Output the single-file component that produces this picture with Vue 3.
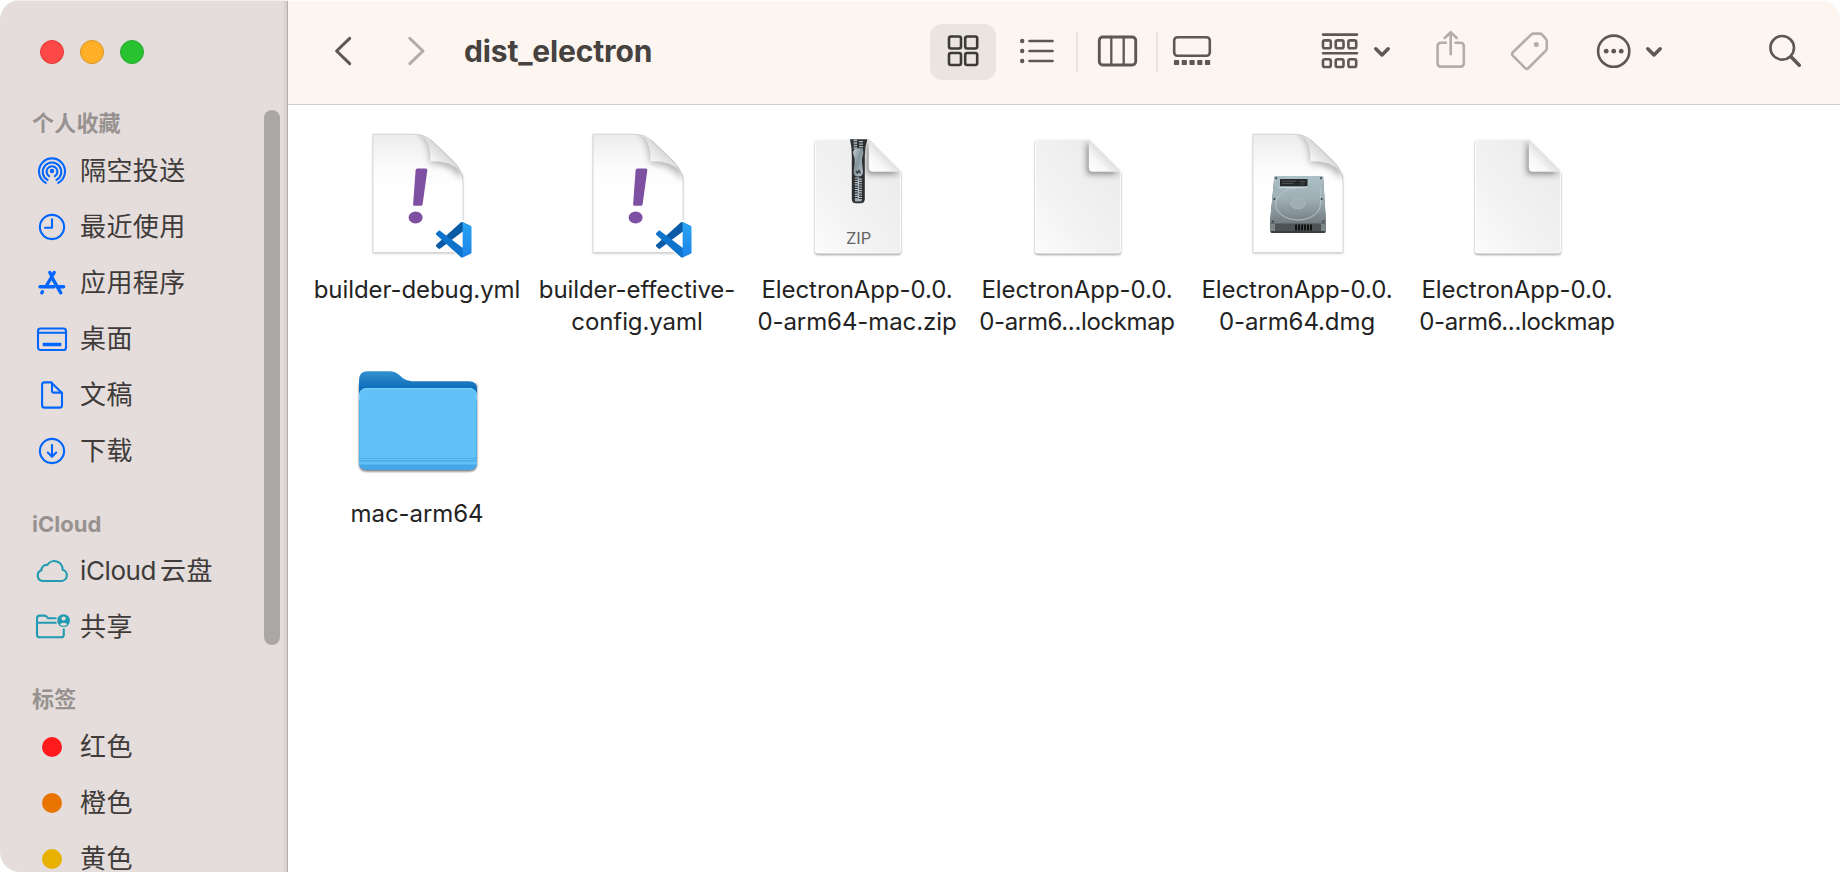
<script setup>
const favorites = [
  { icon: 'airdrop', label: '隔空投送' },
  { icon: 'recents', label: '最近使用' },
  { icon: 'apps', label: '应用程序' },
  { icon: 'desktop', label: '桌面' },
  { icon: 'doc', label: '文稿' },
  { icon: 'download', label: '下载' }
]
const tags = [
  { color: 'red', label: '红色' },
  { color: 'orange', label: '橙色' },
  { color: 'yellow', label: '黄色' }
]
const files = [
  { kind: 'yml', lines: ['builder-debug.yml'] },
  { kind: 'yml', lines: ['builder-effective-', 'config.yaml'] },
  { kind: 'zip', lines: ['ElectronApp-0.0.', '0-arm64-mac.zip'] },
  { kind: 'blank', lines: ['ElectronApp-0.0.', '0-arm6...lockmap'] },
  { kind: 'dmg', lines: ['ElectronApp-0.0.', '0-arm64.dmg'] },
  { kind: 'blank', lines: ['ElectronApp-0.0.', '0-arm6...lockmap'] },
  { kind: 'folder', lines: ['mac-arm64'] }
]
const teeth = Array.from({ length: 10 }, (_, i) => 48 + i * 2.3)
const topTeeth = [10.5, 13, 15.5, 18]
</script>

<template>
  <div class="window">
    <aside class="sidebar">
      <div class="lights">
        <span class="light close"></span>
        <span class="light minimize"></span>
        <span class="light zoom"></span>
      </div>

      <h2 class="heading first cjk">个人收藏</h2>
      <div v-for="item in favorites" :key="item.icon" class="row">
        <svg class="side-icon" viewBox="0 0 36 36">
          <g v-if="item.icon === 'airdrop'">
            <circle cx="18" cy="18" r="2.2" class="solid" />
            <path d="M15.1 23.2A5.4 5.4 0 1 1 20.9 23.2" />
            <path d="M13.5 26.9A9.3 9.3 0 1 1 22.5 26.9" />
            <path d="M11.8 29.8A13 13 0 1 1 24.2 29.8" />
          </g>
          <g v-else-if="item.icon === 'recents'">
            <circle cx="18" cy="18" r="12.1" />
            <path d="M18 10.2V18.8H11" />
          </g>
          <g v-else-if="item.icon === 'apps'" class="thick">
            <path d="M15.8 7.5L17.9 11.2M20.2 7.5L12 21.5M6 21.8H20M8.4 26.8L7.8 27.8" />
            <path d="M18.3 13.2L26.8 27.8M25 21.8H29.6" />
          </g>
          <g v-else-if="item.icon === 'desktop'">
            <rect x="4" y="7.5" width="28" height="21.5" rx="2.6" />
            <path d="M4 11.8H32" />
            <rect x="8.7" y="21.8" width="18.6" height="3.4" rx=".6" class="solid" />
          </g>
          <g v-else-if="item.icon === 'doc'">
            <path d="M10.5 5.4H17.2L28 16V28.2Q28 30.6 25.6 30.6H10.5Q8.1 30.6 8.1 28.2V7.8Q8.1 5.4 10.5 5.4Z" />
            <path d="M18 5.8V14.3Q18 15.6 19.3 15.6H27.8" />
          </g>
          <g v-else>
            <circle cx="18" cy="18" r="12.1" />
            <path d="M18 12V23.4M13.8 19.6L18 23.8L22.2 19.6" />
          </g>
        </svg>
        <span class="cjk-label">{{ item.label }}</span>
      </div>

      <h2 class="heading">iCloud</h2>
      <div class="row">
        <svg class="side-icon teal" viewBox="0 0 36 36">
          <path d="M8.6 28A5.6 5.6 0 0 1 7.4 17.2A5 5 0 0 1 13.3 12A8.3 8.3 0 0 1 28.6 16.8A5.7 5.7 0 0 1 27.2 28Z" />
        </svg>
        <span class="latin">iCloud</span><span class="cjk-label">云盘</span>
      </div>
      <div class="row">
        <svg class="side-icon teal" viewBox="0 0 36 36">
          <path d="M21.6 9.3H14.2L12.4 7.4Q11.6 6.6 10.4 6.6H5.6Q3 6.6 3 9.2V25.7Q3 28.3 5.6 28.3H27.2Q29.8 28.3 29.8 25.7V20.2M3 13.8H21.8" />
          <circle cx="29.6" cy="11.6" r="6.4" class="solid-only" />
          <circle cx="29.6" cy="9.5" r="2.1" class="cut" />
          <path d="M25.8 15.6A4.3 3.4 0 0 1 33.4 15.6Q29.6 18.2 25.8 15.6Z" class="cut" />
        </svg>
        <span class="cjk-label">共享</span>
      </div>

      <h2 class="heading cjk">标签</h2>
      <div v-for="tag in tags" :key="tag.color" class="row">
        <span class="dot-cell"><i class="dot" :class="tag.color"></i></span>
        <span class="cjk-label">{{ tag.label }}</span>
      </div>
      <div class="scrollbar"></div>
    </aside>

    <main class="main">
      <header class="toolbar">
        <svg class="tool back" viewBox="0 0 30 56"><path class="nav" d="M21.7 14.3L8.6 27L21.7 39.7" /></svg>
        <svg class="tool forward faded" viewBox="0 0 30 56"><path class="nav" d="M8.8 14.3L22 27L8.8 39.7" /></svg>
        <h1 class="title">dist_electron</h1>

        <svg class="tool view-grid" viewBox="0 0 66 56">
          <rect x="19" y="12.5" width="12" height="12" rx="2" /><rect x="35.2" y="12.5" width="12" height="12" rx="2" />
          <rect x="19" y="29" width="12" height="12" rx="2" /><rect x="35.2" y="29" width="12" height="12" rx="2" />
        </svg>
        <svg class="tool view-list" viewBox="0 0 54 56">
          <g class="fill"><circle cx="12.2" cy="17" r="2.2" /><circle cx="12.2" cy="27" r="2.2" /><circle cx="12.2" cy="37" r="2.2" /></g>
          <path d="M19.5 17H42.5M19.5 27H42.5M19.5 37H42.5" />
        </svg>
        <i class="sep"></i>
        <svg class="tool view-columns" viewBox="0 0 56 56">
          <rect x="9.3" y="13" width="36.4" height="28" rx="3.4" class="heavy" />
          <path d="M21.3 13V41M33.7 13V41" class="mid" />
        </svg>
        <i class="sep"></i>
        <svg class="tool view-gallery" viewBox="0 0 54 56">
          <rect x="8.2" y="13.2" width="35.6" height="18.6" rx="3.2" />
          <g class="fill">
            <rect v-for="n in 5" :key="n" :x="0.2 + n * 7.75" y="36" width="5.2" height="5" rx=".7" />
          </g>
        </svg>

        <svg class="tool group" viewBox="0 0 84 56">
          <path d="M9 10.6H43M9 29.3H43" />
          <rect v-for="n in 3" :key="'a' + n" :x="-3.7 + n * 12.7" y="16.4" width="7.8" height="7.8" rx="1.8" />
          <rect v-for="n in 3" :key="'b' + n" :x="-3.7 + n * 12.7" y="35.2" width="7.8" height="7.8" rx="1.8" />
          <path class="chevron" d="M61.8 24.8L68 31L74.2 24.8" />
        </svg>
        <svg class="tool share faded" viewBox="0 0 42 56">
          <path d="M15.8 18.8H11Q7.6 18.8 7.6 22.2V39.2Q7.6 42.6 11 42.6H30.4Q33.8 42.6 33.8 39.2V22.2Q33.8 18.8 30.4 18.8H25.6M20.7 30.2V8.8M14.7 14L20.7 8.2L26.7 14" />
        </svg>
        <svg class="tool tag faded" viewBox="0 0 52 56">
          <path d="M27.2 10.6Q28.2 9.6 29.6 9.6H35.6Q37.1 9.6 38.2 10.7L41.8 14.8Q42.8 15.9 42.8 17.3V24.2Q42.8 25.7 41.8 26.7L24.5 44Q22.8 45.8 21 43.9L9 31.8Q7.2 30 9 28.2Z" />
          <circle cx="32.3" cy="20.5" r="2.5" class="dotfill" />
        </svg>
        <svg class="tool more" viewBox="0 0 80 56">
          <circle cx="23.7" cy="27.2" r="15.6" />
          <g class="fill"><circle cx="16.2" cy="27.2" r="2.4" /><circle cx="23.7" cy="27.2" r="2.4" /><circle cx="31.2" cy="27.2" r="2.4" /></g>
          <path class="chevron" d="M57.8 24.8L64 31L70.2 24.8" />
        </svg>
        <svg class="tool search" viewBox="0 0 50 56">
          <circle cx="22.2" cy="23.8" r="11.8" />
          <path class="handle" d="M31.5 33.2L39.3 41.2" />
        </svg>
      </header>

      <section class="files">
        <figure v-for="(file, i) in files" :key="i" class="file">
          <svg class="file-icon" viewBox="0 0 128 128">
            <defs>
              <linearGradient :id="'page' + i" x1="0" y1="1" x2="1" y2="0">
                <stop offset="0" stop-color="#fcfcfc" /><stop offset=".35" stop-color="#f3f3f3" /><stop offset="1" stop-color="#e9e9e9" />
              </linearGradient>
              <linearGradient :id="'fold' + i" x1="0" y1="1" x2=".55" y2=".45">
                <stop offset="0" stop-color="#fff" /><stop offset=".5" stop-color="#f8f8f8" /><stop offset="1" stop-color="#dcdcdc" />
              </linearGradient>
              <linearGradient :id="'top' + i" x1="0" y1="0" x2="0" y2="1">
                <stop offset="0" stop-color="#ededed" /><stop offset=".3" stop-color="#fcfcfc" /><stop offset=".5" stop-color="#fff" />
              </linearGradient>
              <filter :id="'blur' + i" x="-50%" y="-50%" width="200%" height="200%"><feGaussianBlur stdDeviation="3" /></filter>
              <filter :id="'soft' + i" x="-20%" y="-20%" width="140%" height="140%"><feGaussianBlur stdDeviation="1" /></filter>
              <clipPath :id="'curl' + i"><path d="M19 4.3H62Q70 4.3 77 10L101 33Q109 41 109 54V122.5H19Z" /></clipPath>
              <clipPath :id="'sheet' + i"><path d="M24 9.3H75L107 41.5V120.5Q107 123.5 104 123.5H24Q21 123.5 21 120.5V12.3Q21 9.3 24 9.3Z" /></clipPath>
              <linearGradient :id="'metal' + i" x1="0" y1="0" x2="0" y2="1">
                <stop offset="0" stop-color="#acc0c7" /><stop offset=".5" stop-color="#9dadb3" /><stop offset="1" stop-color="#737c80" />
              </linearGradient>
              <linearGradient :id="'back' + i" x1="0" y1="0" x2="0" y2="1">
                <stop offset="0" stop-color="#3391d0" /><stop offset=".4" stop-color="#0d6cba" />
              </linearGradient>
              <linearGradient :id="'pull' + i" x1="0" y1="0" x2="1" y2="1">
                <stop offset="0" stop-color="#c4d0d8" /><stop offset=".45" stop-color="#84939c" /><stop offset="1" stop-color="#b9c7d0" />
              </linearGradient>
              <linearGradient :id="'code' + i" x1="0" y1="0" x2="0" y2="1">
                <stop offset="0" stop-color="#29a5f3" /><stop offset="1" stop-color="#1d83ea" />
              </linearGradient>
            </defs>

            <!-- white curled document -->
            <g v-if="file.kind === 'yml' || file.kind === 'dmg'">
              <path d="M19 5H62L109 45V123.4H19Z" fill="#000" opacity=".25" :filter="`url(#soft${i})`" />
              <path d="M19 4.3H62Q70 4.3 77 10L101 33Q109 41 109 54V122.5H19Z" :fill="`url(#top${i})`" stroke="#d2d2d2" stroke-width=".8" />
              <g :clip-path="`url(#curl${i})`">
                <path d="M60 -2Q75 8 75.5 31L78 34Q96 34 108 50V36L80 0Z" fill="#777" opacity=".5" :filter="`url(#blur${i})`" />
              </g>
              <path d="M65 4.6Q77 9 76.4 31.2Q96 30.5 105.5 40.5L101 33L77 10Q72 5.4 65 4.6Z" :fill="`url(#fold${i})`" />
              <path d="M77 10L101 33" stroke="#bababa" stroke-width=".8" />
            </g>

            <g v-if="file.kind === 'yml'">
              <path d="M63.4 38.6H71.8Q73.6 38.6 73.3 40.4L68.6 74.2Q68.4 75.8 66.8 75.8H60.5Q59 75.8 59.1 74.2L61.6 40.2Q61.8 38.6 63.4 38.6Z" fill="#7e50a1" />
              <ellipse cx="61.6" cy="87.4" rx="7" ry="6" fill="#7e50a1" />
              <g transform="translate(82 92) scale(.355)">
                <path d="M75 0L100 12V88L75 100L40 70L9 77L-1 66L16 50L-1 34L9 23L40 30Z" fill="#fff" stroke="#fff" stroke-width="10" stroke-linejoin="round" />
                <path fill="#0a5ba6" d="M96.46 10.8L75.86 .88C73.47-.27 70.62.21 68.75 2.08L1.3 63.58C-.52 65.24-.51 68.09 1.3 69.75L6.81 74.75C8.3 76.1 10.53 76.2 12.13 74.99L93.36 13.37C96.09 11.3 100 13.25 100 16.67V16.43C100 14.03 98.62 11.84 96.46 10.8Z" />
                <path fill="#0e73cb" d="M96.46 89.2L75.86 99.12C73.47 100.27 70.62 99.79 68.75 97.92L1.3 36.42C-.52 34.76-.51 31.91 1.3 30.25L6.81 25.25C8.3 23.9 10.53 23.8 12.13 25.01L93.36 86.63C96.09 88.7 100 86.75 100 83.33V83.57C100 85.97 98.62 88.16 96.46 89.2Z" />
                <path :fill="`url(#code${i})`" d="M75.86 99.13C73.47 100.27 70.62 99.79 68.75 97.92C71.06 100.22 75 98.59 75 95.33V4.67C75 1.41 71.06-.22 68.75 2.08C70.62.21 73.47-.27 75.86.87L96.46 10.78C98.62 11.82 100 14.01 100 16.41V83.59C100 85.99 98.62 88.18 96.46 89.22Z" />
              </g>
            </g>

            <g v-if="file.kind === 'dmg'">
              <path d="M42 46H87.5Q89 46 89.2 47.5L91.8 91V101Q91.8 103 90 103H38Q36.2 103 36.2 101V91L40.3 47.5Q40.5 46 42 46Z" fill="#4d5254" />
              <path d="M42 46H87.5Q89 46 89.2 47.5L92 91Q92 93.5 90 93.5H38Q36 93.5 36 91L40.3 47.5Q40.5 46 42 46Z" :fill="`url(#metal${i})`" />
              <path d="M36.4 94H41V101H36.4ZM87 94H91.6V101H87Z" fill="#7c8588" />
              <path d="M37 101.4H91.2V102.6H37Z" fill="#2c2c2c" />
              <rect x="46" y="49" width="27.5" height="7.2" fill="#25292a" />
              <path d="M48 51.2H62M48 53.5H59M66 51.6H71M67 54H70" stroke="#596062" stroke-width=".8" />
              <path d="M44.6 57.6H73" stroke="#dae4e8" stroke-width=".8" />
              <path d="M86.4 58V74A22.4 16 0 1 1 64 58Q73 58 73.5 56" fill="none" stroke="#bccace" stroke-width=".9" />
              <ellipse cx="64" cy="73.6" rx="7" ry="5.2" fill="#a0adb2" stroke="#b0bdc2" stroke-width=".7" />
              <g fill="#30383b"><circle cx="42.3" cy="48.2" r="1" /><circle cx="87" cy="48.2" r="1" /><circle cx="40.3" cy="69" r="1" /><circle cx="87.6" cy="69" r="1" /><circle cx="38.8" cy="91.5" r="1" /><circle cx="89.3" cy="91.5" r="1" /></g>
              <path d="M62 94.5V100.5M65 94.5V100.5M68 94.5V100.5M71 94.5V100.5M74 94.5V100.5M77 94.5V100.5" stroke="#080808" stroke-width="1.7" />
            </g>

            <!-- plain grey document -->
            <g v-if="file.kind === 'zip' || file.kind === 'blank'">
              <path d="M24 11H75L107 43V122Q107 125 104 125H24Q21 125 21 122V13Q21 11 24 11Z" fill="#000" opacity=".36" :filter="`url(#soft${i})`" />
              <path d="M24 9.3H75L107 41.5V120.5Q107 123.5 104 123.5H24Q21 123.5 21 120.5V12.3Q21 9.3 24 9.3Z" :fill="`url(#page${i})`" />
              <g :clip-path="`url(#sheet${i})`">
                <path d="M74 14V43H103L75 14Z" fill="#333" stroke="#333" stroke-width="2" opacity=".55" :filter="`url(#blur${i})`" />
                <path d="M24 9.8H75L106.5 41.5V120.5Q106.5 123 104 123H24Q21.5 123 21.5 120.5V12.3Q21.5 9.8 24 9.8Z" fill="none" stroke="#fff" stroke-opacity=".7" />
              </g>
              <path d="M74.8 9.3L107 41.8H79Q74.8 41.8 74.8 37.6Z" :fill="`url(#fold${i})`" />
            </g>

            <g v-if="file.kind === 'zip'">
              <path d="M56 9.3H73.4Q70.8 17 70.8 25V69Q70.8 73.2 66.6 73.2H62Q57.8 73.2 57.8 69V25Q57.8 17 56 9.3Z" fill="#2d2f31" />
              <path v-for="y in teeth" :key="y" :d="`M60.8 ${y}H65M63.8 ${y + 1.1}H68`" stroke="#b7c2c9" stroke-width="1.1" />
              <path v-for="y in topTeeth" :key="'t' + y" :d="`M59.6 ${y}H63.2M65 ${y + 1.2}H69`" stroke="#aeb9bf" stroke-width="1.3" />
              <path d="M61 19Q64.3 17.4 67.6 19Q70.2 20.8 69 24.5Q67.5 28 68 32.6L69 42Q68.7 46.6 64.3 46.6T59.6 42L60.7 32.6Q61.2 28 59.4 24.5Q58.4 20.8 61 19Z" :fill="`url(#pull${i})`" />
              <path d="M62 41L63.5 43L65 40.5L66.6 43.5" fill="none" stroke="#2d3236" stroke-width="1.3" />
              <rect x="61" y="69" width="6.5" height="2.4" fill="#a6b1b7" />
              <text x="64.6" y="114" class="ext">ZIP</text>
            </g>

            <g v-if="file.kind === 'folder'">
              <path d="M5 30H123V110Q123 117.5 115 117.5H13Q5 117.5 5 110Z" fill="#000" opacity=".55" :filter="`url(#soft${i})`" />
              <path d="M5 60V26Q5 17.3 13.5 17.3H36Q41 17.3 45 20.8L49 24.3Q52.8 27.2 57.5 27.2H115Q123 27.2 123 35.5V60Z" :fill="`url(#back${i})`" />
              <rect x="5" y="34" width="118" height="82" rx="8" fill="#62c2f8" />
              <path d="M5.5 48V42Q5.5 34.5 13 34.5H115Q122.5 34.5 122.5 42V48" fill="none" stroke="#78d0fd" />
              <path d="M5 104.3H123" stroke="#50aee9" stroke-width="1.2" />
              <path d="M5 106.8H123" stroke="#4aa5df" stroke-width="1.2" />
              <path d="M5 110.6H123Q122 116 115 116H13Q6 116 5 110.6Z" fill="#45a7e7" />
              <path d="M5.5 46V108M122.5 46V108" stroke="#4baeeb" opacity=".7" />
            </g>
          </svg>
          <figcaption class="name">
            <span v-for="line in file.lines" :key="line" :class="{ truncated: line.includes('...') }">{{ line }}</span>
          </figcaption>
        </figure>
      </section>
    </main>
  </div>
</template>

<style>
html, body { margin: 0; background: #fff; overflow: hidden; }
</style>

<style scoped>
.window {
  box-sizing: border-box;
  display: flex;
  width: 1840px;
  height: 872px;
  overflow: hidden;
  border-radius: 20px;
  background: #fff;
  font-family: Inter, "Noto Sans CJK SC", sans-serif;
}
.sidebar {
  position: relative;
  flex: none;
  box-sizing: border-box;
  width: 288px;
  overflow: hidden;
  background: linear-gradient(90deg, transparent 282px, rgba(70, 60, 55, .1) 287px, rgba(70, 60, 55, .3) 287px), #e5dddb;
  box-shadow: inset 0 1px #f1edec;
}
.lights { display: flex; gap: 16px; padding: 40px 0 0 40px; }
.light { box-sizing: border-box; width: 24px; height: 24px; border-radius: 50%; border: 1px solid; }
.close { background: #ff4947; border-color: #e0383a; }
.minimize { background: #ffb026; border-color: #d99320; }
.zoom { background: #29c331; border-color: #22ac2b; }
.heading {
  display: flex;
  align-items: center;
  box-sizing: border-box;
  height: 30px;
  margin: 30px 0 0;
  padding-left: 32px;
  color: #979290;
  font-size: 22px;
  font-weight: 700;
  line-height: 30px;
}
.heading.cjk { padding-bottom: 2px; letter-spacing: .2px; }
.heading.first { margin-top: 45px; }
.heading + .row { margin-top: 4px; }
.row {
  display: flex;
  align-items: center;
  height: 56px;
  padding-left: 34px;
  color: #3e3b3a;
  font-size: 26px;
  line-height: 56px;
}
.side-icon, .dot-cell { flex: none; width: 36px; height: 36px; margin-right: 10px; }
.side-icon { overflow: visible; fill: none; stroke: #0066fe; stroke-width: 2.1; stroke-linecap: round; stroke-linejoin: round; }
.side-icon .solid { fill: #0066fe; stroke: none; }
.side-icon .thick { stroke-width: 3.4; }
.side-icon.teal { stroke: #219bb2; }
.teal .solid-only { fill: #219bb2; stroke: none; }
.teal .cut { fill: #e5dddb; stroke: none; }
.cjk-label { letter-spacing: .4px; }
.latin { margin-right: 4px; letter-spacing: -.4px; }
.dot-cell { display: grid; place-items: center; }
.dot { width: 20px; height: 20px; border-radius: 50%; }
.red { background: #ff1a1d; }
.orange { background: #e97500; }
.yellow { background: #e8b102; }
.scrollbar { position: absolute; left: 264px; top: 110px; width: 16px; height: 535px; border-radius: 8px; background: #aba7a4; }

.main { flex: 1; min-width: 0; }
.toolbar {
  display: flex;
  align-items: center;
  box-sizing: border-box;
  height: 105px;
  padding: 0 0 1px 40px;
  border-bottom: 1px solid #d1cccb;
  background: #fdf5f0;
  box-shadow: inset 0 1px #fffdfc;
}
.tool { flex: none; height: 56px; fill: none; stroke: #5e5854; stroke-width: 2.6; stroke-linecap: round; stroke-linejoin: round; }
.tool .fill { fill: #5e5854; stroke: none; }
.tool .dotfill { fill: #b3adaa; stroke: none; }
.tool .heavy { stroke-width: 2.9; }
.tool .mid { stroke-width: 2.3; }
.tool .nav { stroke-width: 3; }
.tool .chevron, .tool .handle { stroke-width: 3.5; }
.tool.faded { stroke: #b3adaa; }
.back { width: 30px; }
.forward { width: 30px; margin-left: 43px; }
.title { flex: none; width: 466px; margin: -2px 0 0 33px; color: #454240; font-size: 30px; font-weight: 700; line-height: 56px; letter-spacing: -.15px; }
.tool.view-grid { width: 66px; border-radius: 12px; background: #eae5df; stroke: #3d3a38; }
.view-list { width: 54px; margin-left: 14px; }
.sep { flex: none; width: 2px; height: 40px; margin: 0 10px 0 12px; background: #e9e2de; }
.view-columns { width: 56px; margin: 0 -2px 0 2px; }
.view-gallery { width: 54px; margin-left: -2px; }
.group { width: 84px; margin-left: 94px; }
.share { width: 42px; margin-left: 32px; }
.tag { width: 52px; margin-left: 32px; }
.more { width: 80px; margin-left: 34px; }
.search { width: 50px; margin-left: 90px; }

.files { display: grid; grid-template-columns: repeat(6, 220px); grid-auto-rows: 224px; padding: 25px 0 0 20px; }
.file { display: flex; flex-direction: column; align-items: center; margin: 0; }
.file-icon { width: 128px; height: 128px; }
.ext { fill: #646464; font-family: Inter, sans-serif; font-size: 16.5px; font-weight: 400; text-anchor: middle; }
.name { display: flex; flex-direction: column; align-items: center; margin: 16px 2px 0 0; color: #232323; font-size: 24px; line-height: 32px; letter-spacing: -.08px; white-space: nowrap; }
.truncated { letter-spacing: -.36px; }
</style>
